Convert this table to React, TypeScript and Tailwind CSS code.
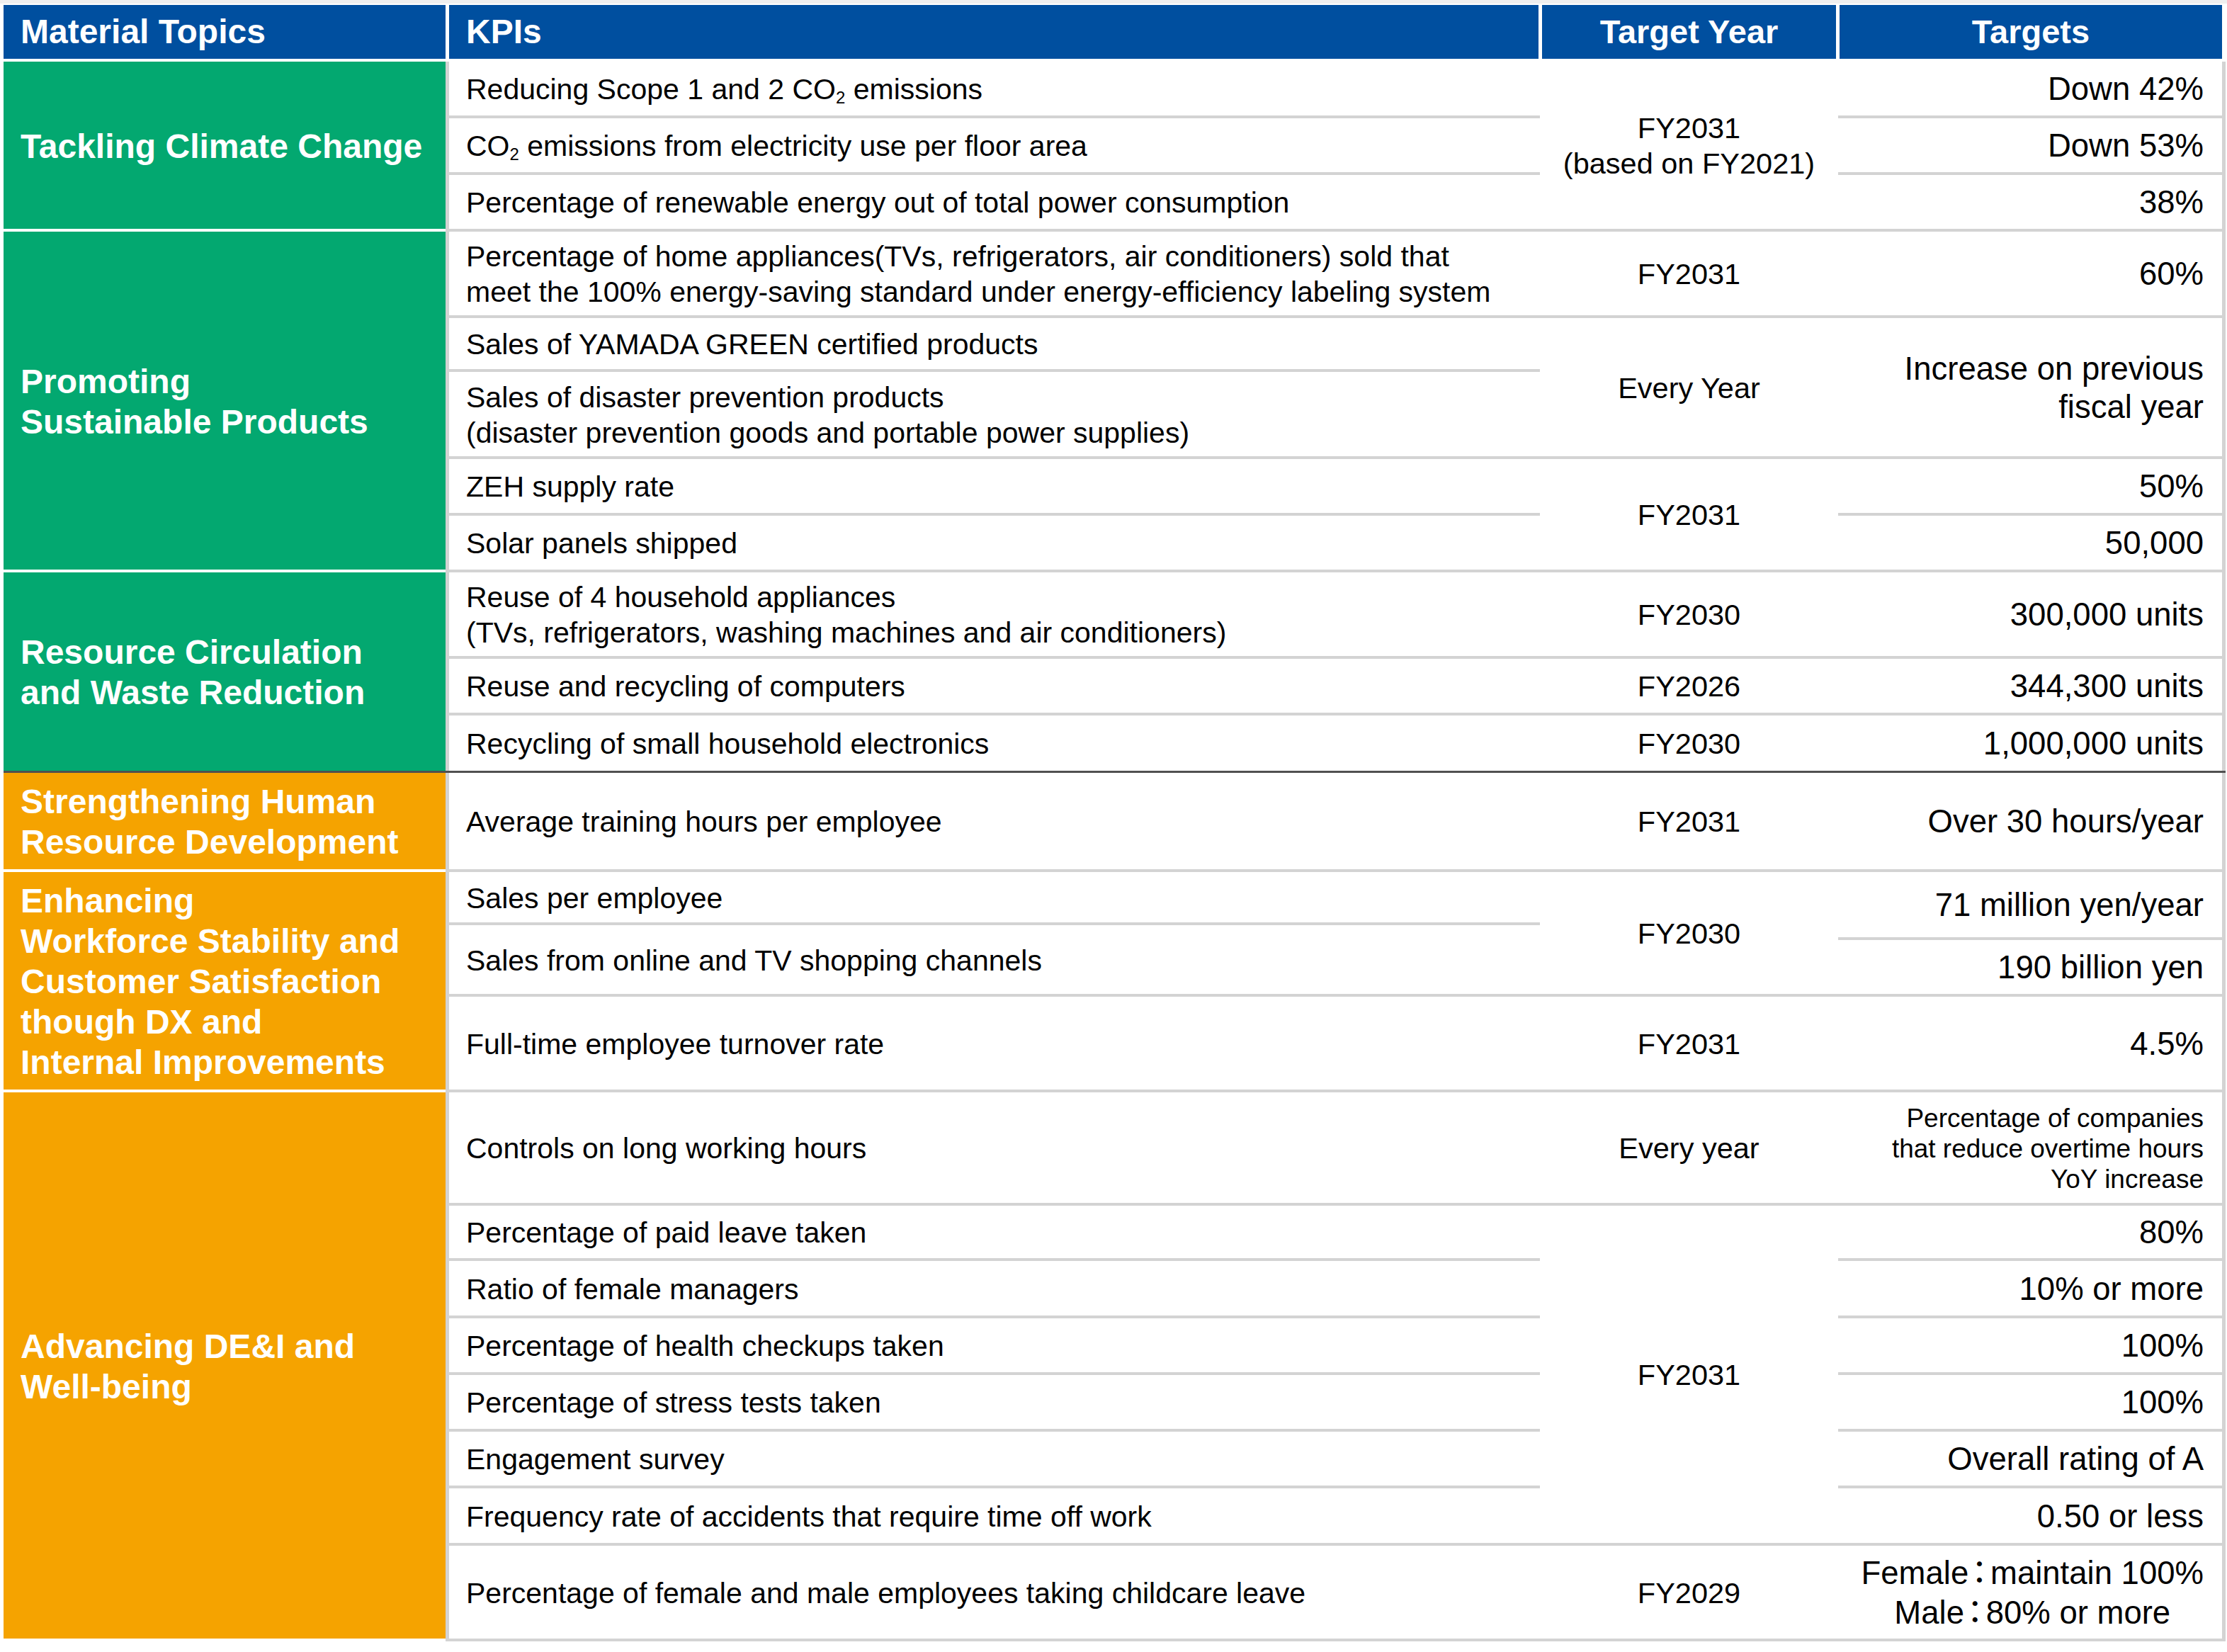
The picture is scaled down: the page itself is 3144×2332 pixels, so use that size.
import React from "react";

type P = { pos: string; children: React.ReactNode };

function Topic({ pos, color, children }: P & { color: string }) {
  return (
    <div
      className={`col-start-1 flex items-center pl-[24px] pr-[10px] pt-[2px] text-[48px] font-bold leading-[57px] text-white bg-clip-padding border-b-4 border-white ${pos} ${color}`}
    >
      <div>{children}</div>
    </div>
  );
}

function Kpi({ pos, children }: P) {
  return (
    <div className={`col-start-3 flex items-center pl-[24px] pt-[2px] text-[41px] leading-[50px] text-black ${pos}`}>
      <div>{children}</div>
    </div>
  );
}

function Year({ pos, children }: P) {
  return (
    <div className={`col-start-4 flex items-center justify-center pt-[2px] text-center text-[41.5px] leading-[50px] text-black ${pos}`}>
      <div>{children}</div>
    </div>
  );
}

function Target({ pos, children }: P) {
  return (
    <div className={`col-start-5 flex items-center justify-end pr-[26px] pt-[2px] text-right text-[45.5px] leading-[54px] text-black ${pos}`}>
      <div>{children}</div>
    </div>
  );
}

const line = "border-b-4 border-[#d3d3d3]";
const green = "bg-[#03a870]";
const orange = "bg-[#f5a300]";

function Colon() {
  return <span className="px-[4px] [font-feature-settings:'palt']">：</span>;
}

export default function App() {
  return (
    <div className="min-h-screen bg-white font-['Liberation_Sans','Noto_Sans_CJK_JP',sans-serif]">
      <div className="h-[5px] bg-[#efefef]" />

      {/* header */}
      <div className="flex h-[78px] gap-[5px] pl-[5px] pt-[2px] text-[47px] font-bold text-white">
        <div className="flex w-[624px] items-center bg-[#004f9f] pl-[24px] text-[48px]">Material Topics</div>
        <div className="flex w-[1538px] items-center bg-[#004f9f] pl-[24px] text-[48px]">KPIs</div>
        <div className="flex w-[415px] items-center justify-center bg-[#004f9f]">Target Year</div>
        <div className="flex w-[540px] items-center justify-center bg-[#004f9f]">Targets</div>
      </div>
      <div className="h-[4px]" />

      {/* body */}
      <div className="grid grid-cols-[624px_5px_1540px_421px_542px_5px] grid-rows-[80px_80px_80px_122px_76px_123px_80px_80px_122px_80px_78px_3px_140px_75px_21px_80px_135px_160px_78px_81px_80px_80px_80px_81px_135px] pl-[5px]">
        <div className="col-start-2 row-start-1 row-span-25 bg-[#d3d3d3]" />
        <div className="col-start-6 row-start-1 row-span-25 bg-[#d3d3d3]" />

        <Topic pos="row-start-1 row-span-3" color={green}>Tackling Climate Change</Topic>
        <Topic pos="row-start-4 row-span-5" color={green}>
          Promoting
          <br />
          Sustainable Products
        </Topic>
        <Topic pos="row-start-9 row-span-3 !border-b-0" color={green}>
          Resource Circulation
          <br />
          and Waste Reduction
        </Topic>
        <div className="col-start-1 col-span-6 row-start-12 bg-[#505050]" />
        <Topic pos="row-start-13" color={orange}>
          Strengthening Human
          <br />
          Resource Development
        </Topic>
        <Topic pos="row-start-14 row-span-4" color={orange}>
          Enhancing
          <br />
          Workforce Stability and
          <br />
          Customer Satisfaction
          <br />
          though DX and
          <br />
          Internal Improvements
        </Topic>
        <Topic pos="row-start-18 row-span-8" color={orange}>
          Advancing DE&amp;I and
          <br />
          Well-being
        </Topic>

        {/* KPIs */}
        <Kpi pos={`row-start-1 ${line}`}>
          Reducing Scope 1 and 2 CO<sub className="text-[24px]">2</sub> emissions
        </Kpi>
        <Kpi pos={`row-start-2 ${line}`}>
          CO<sub className="text-[24px]">2</sub> emissions from electricity use per floor area
        </Kpi>
        <Kpi pos={`row-start-3 ${line}`}>Percentage of renewable energy out of total power consumption</Kpi>
        <Kpi pos={`row-start-4 ${line}`}>
          Percentage of home appliances(TVs, refrigerators, air conditioners) sold that
          <br />
          meet the 100% energy-saving standard under energy-efficiency labeling system
        </Kpi>
        <Kpi pos={`row-start-5 ${line}`}>Sales of YAMADA GREEN certified products</Kpi>
        <Kpi pos={`row-start-6 ${line}`}>
          Sales of disaster prevention products
          <br />
          (disaster prevention goods and portable power supplies)
        </Kpi>
        <Kpi pos={`row-start-7 ${line}`}>ZEH supply rate</Kpi>
        <Kpi pos={`row-start-8 ${line}`}>Solar panels shipped</Kpi>
        <Kpi pos={`row-start-9 ${line}`}>
          Reuse of 4 household appliances
          <br />
          (TVs, refrigerators, washing machines and air conditioners)
        </Kpi>
        <Kpi pos={`row-start-10 ${line}`}>Reuse and recycling of computers</Kpi>
        <Kpi pos="row-start-11">Recycling of small household electronics</Kpi>
        <Kpi pos={`row-start-13 ${line}`}>Average training hours per employee</Kpi>
        <Kpi pos={`row-start-14 ${line}`}>Sales per employee</Kpi>
        <Kpi pos={`row-start-15 row-span-2 ${line}`}>Sales from online and TV shopping channels</Kpi>
        <Kpi pos={`row-start-17 ${line}`}>Full-time employee turnover rate</Kpi>
        <Kpi pos={`row-start-18 ${line}`}>Controls on long working hours</Kpi>
        <Kpi pos={`row-start-19 ${line}`}>Percentage of paid leave taken</Kpi>
        <Kpi pos={`row-start-20 ${line}`}>Ratio of female managers</Kpi>
        <Kpi pos={`row-start-21 ${line}`}>Percentage of health checkups taken</Kpi>
        <Kpi pos={`row-start-22 ${line}`}>Percentage of stress tests taken</Kpi>
        <Kpi pos={`row-start-23 ${line}`}>Engagement survey</Kpi>
        <Kpi pos={`row-start-24 ${line}`}>Frequency rate of accidents that require time off work</Kpi>
        <Kpi pos={`row-start-25 ${line}`}>Percentage of female and male employees taking childcare leave</Kpi>

        {/* Target year */}
        <Year pos={`row-start-1 row-span-3 ${line}`}>
          FY2031
          <br />
          (based on FY2021)
        </Year>
        <Year pos={`row-start-4 ${line}`}>FY2031</Year>
        <Year pos={`row-start-5 row-span-2 ${line}`}>Every Year</Year>
        <Year pos={`row-start-7 row-span-2 ${line}`}>FY2031</Year>
        <Year pos={`row-start-9 ${line}`}>FY2030</Year>
        <Year pos={`row-start-10 ${line}`}>FY2026</Year>
        <Year pos="row-start-11">FY2030</Year>
        <Year pos={`row-start-13 ${line}`}>FY2031</Year>
        <Year pos={`row-start-14 row-span-3 ${line}`}>FY2030</Year>
        <Year pos={`row-start-17 ${line}`}>FY2031</Year>
        <Year pos={`row-start-18 ${line}`}>Every year</Year>
        <Year pos={`row-start-19 row-span-6 ${line}`}>FY2031</Year>
        <Year pos={`row-start-25 ${line}`}>FY2029</Year>

        {/* Targets */}
        <Target pos={`row-start-1 ${line}`}>Down 42%</Target>
        <Target pos={`row-start-2 ${line}`}>Down 53%</Target>
        <Target pos={`row-start-3 ${line}`}>38%</Target>
        <Target pos={`row-start-4 ${line}`}>60%</Target>
        <Target pos={`row-start-5 row-span-2 ${line}`}>
          Increase on previous
          <br />
          fiscal year
        </Target>
        <Target pos={`row-start-7 ${line}`}>50%</Target>
        <Target pos={`row-start-8 ${line}`}>50,000</Target>
        <Target pos={`row-start-9 ${line}`}>300,000 units</Target>
        <Target pos={`row-start-10 ${line}`}>344,300 units</Target>
        <Target pos="row-start-11">1,000,000 units</Target>
        <Target pos={`row-start-13 ${line}`}>Over 30 hours/year</Target>
        <Target pos={`row-start-14 row-span-2 ${line}`}>71 million yen/year</Target>
        <Target pos={`row-start-16 ${line}`}>190 billion yen</Target>
        <Target pos={`row-start-17 ${line}`}>4.5%</Target>
        <Target pos={`row-start-18 ${line}`}>
          <div className="text-[37px] leading-[43px]">
            Percentage of companies
            <br />
            that reduce overtime hours
            <br />
            YoY increase
          </div>
        </Target>
        <Target pos={`row-start-19 ${line}`}>80%</Target>
        <Target pos={`row-start-20 ${line}`}>10% or more</Target>
        <Target pos={`row-start-21 ${line}`}>100%</Target>
        <Target pos={`row-start-22 ${line}`}>100%</Target>
        <Target pos={`row-start-23 ${line}`}>Overall rating of A</Target>
        <Target pos={`row-start-24 ${line}`}>0.50 or less</Target>
        <Target pos={`row-start-25 ${line}`}>
          <div className="text-center leading-[56px]">
            Female
            <Colon />
            maintain 100%
            <br />
            Male
            <Colon />
            80% or more
          </div>
        </Target>
      </div>
    </div>
  );
}
